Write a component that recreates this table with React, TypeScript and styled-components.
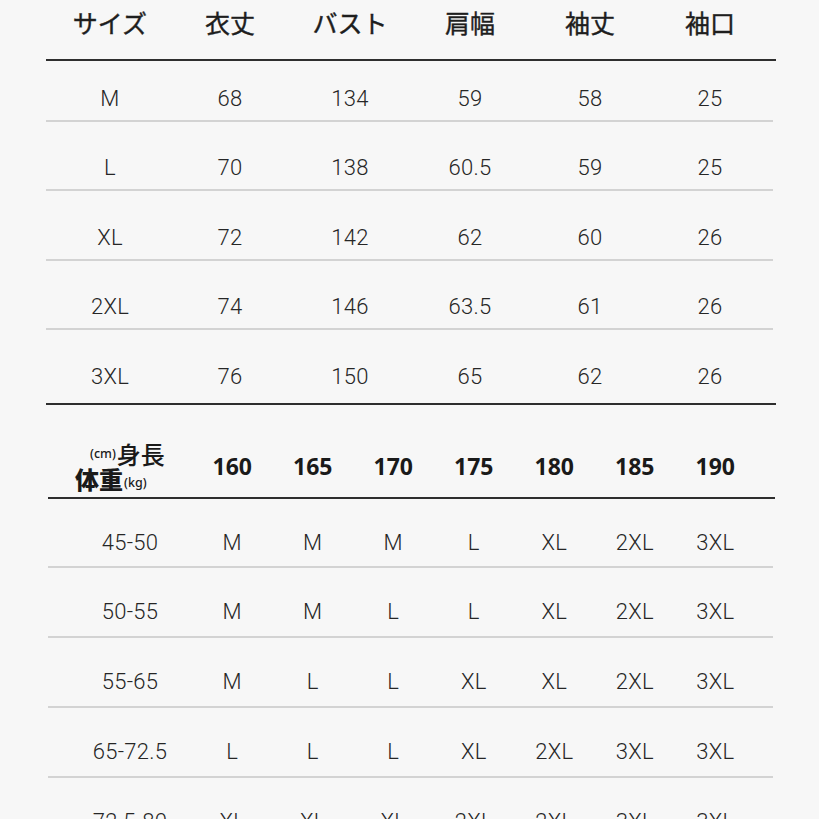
import React from 'react';
import styled, { createGlobalStyle } from 'styled-components';

const GlobalStyle = createGlobalStyle`
  html, body {
    margin: 0;
    padding: 0;
    background: #f7f7f7;
  }
  body {
    font-family: Roboto, "Noto Sans", "Noto Sans CJK JP", sans-serif;
    color: #262626;
  }
`;

const Page = styled.div`
  width: 819px;
  height: 819px;
  overflow: hidden;
  background: #f7f7f7;
  padding-left: 46px;
  box-sizing: border-box;
`;

const Table = styled.div`
  width: 730px;
  display: flex;
  flex-direction: column;
`;

const SizeRow = styled.div<{ $top: number; $bottom: number; $line: 'dark' | 'light' }>`
  display: grid;
  grid-template-columns: repeat(6, 120px);
  padding: ${(p) => p.$top}px 6px ${(p) => p.$bottom}px 4px;
  border-bottom: 2px solid ${(p) => (p.$line === 'dark' ? '#2e2e2e' : '#d3d3d3')};
  margin-right: ${(p) => (p.$line === 'dark' ? 0 : 3)}px;
`;

const HeadCell = styled.div`
  text-align: center;
  font-family: "Noto Sans CJK JP", "Noto Sans", sans-serif;
  font-weight: 400;
  font-size: 25px;
  line-height: 26px;
  color: #1e1e1e;
  -webkit-text-stroke: 0.4px #1e1e1e;
`;

const Cell = styled.div`
  text-align: center;
  font-family: Roboto, "Liberation Sans", sans-serif;
  font-weight: 300;
  font-size: 22px;
  line-height: 22px;
  letter-spacing: 0.3px;
  color: #262626;
`;

const FitRow = styled.div<{ $top: number; $bottom: number; $line: 'dark' | 'light' }>`
  display: grid;
  grid-template-columns: 144px repeat(7, 80.5px);
  align-items: center;
  padding: ${(p) => p.$top}px 0 ${(p) => p.$bottom}px 0;
  border-bottom: 2px solid ${(p) => (p.$line === 'dark' ? '#2e2e2e' : '#d3d3d3')};
  margin-left: 2px;
  margin-right: ${(p) => (p.$line === 'dark' ? 1 : 3)}px;
`;

const WeightCell = styled(Cell)`
  padding-left: 20px;
`;

const HeightCell = styled.div`
  text-align: center;
  font-family: "Noto Sans", "Liberation Sans", sans-serif;
  font-weight: 700;
  font-size: 23px;
  line-height: 24px;
  color: #1a1a1a;
`;

const Label = styled.div`
  display: flex;
  flex-direction: column;
  padding-left: 27px;
  font-family: "Noto Sans CJK JP", sans-serif;
  color: #1a1a1a;
`;

const LabelLine = styled.div<{ $indent: number }>`
  display: flex;
  align-items: ${(p) => (p.$indent > 0 ? 'center' : 'flex-end')};
  padding-left: ${(p) => p.$indent}px;
  line-height: 25px;
`;

const Big = styled.span<{ $bold?: boolean }>`
  font-size: 24px;
  font-weight: ${(p) => (p.$bold ? 900 : 500)};
`;

const Unit = styled.span`
  font-family: "Noto Sans", sans-serif;
  font-size: 12.5px;
  font-weight: 500;
  line-height: 16px;
  padding: 0 1px;
`;

const headers = ['サイズ', '衣丈', 'バスト', '肩幅', '袖丈', '袖口'];

const sizes = [
  ['M', '68', '134', '59', '58', '25'],
  ['L', '70', '138', '60.5', '59', '25'],
  ['XL', '72', '142', '62', '60', '26'],
  ['2XL', '74', '146', '63.5', '61', '26'],
  ['3XL', '76', '150', '65', '62', '26'],
];

const sizePad = [
  [27, 10],
  [35, 10],
  [36, 10],
  [35, 10],
  [36, 15],
];

const heights = ['160', '165', '170', '175', '180', '185', '190'];

const fits = [
  ['45-50', 'M', 'M', 'M', 'L', 'XL', '2XL', '3XL'],
  ['50-55', 'M', 'M', 'L', 'L', 'XL', '2XL', '3XL'],
  ['55-65', 'M', 'L', 'L', 'XL', 'XL', '2XL', '3XL'],
  ['65-72.5', 'L', 'L', 'L', 'XL', '2XL', '3XL', '3XL'],
  ['72.5-80', 'XL', 'XL', 'XL', '2XL', '2XL', '3XL', '3XL'],
];

const fitPad = [
  [33, 12],
  [33, 13],
  [33, 13],
  [33, 13],
  [33, 13],
];

const App: React.FC = () => {
  return (
    <Page>
      <GlobalStyle />
      <Table>
        <SizeRow $top={9} $bottom={24} $line="dark">
          {headers.map((h) => (
            <HeadCell key={h}>{h}</HeadCell>
          ))}
        </SizeRow>
        {sizes.map((row, i) => (
          <SizeRow
            key={row[0]}
            $top={sizePad[i][0]}
            $bottom={sizePad[i][1]}
            $line={i === sizes.length - 1 ? 'dark' : 'light'}
          >
            {row.map((v, j) => (
              <Cell key={j}>{v}</Cell>
            ))}
          </SizeRow>
        ))}
        <FitRow $top={36} $bottom={6} $line="dark">
          <Label>
            <LabelLine $indent={14}>
              <Unit>(cm)</Unit>
              <Big>身長</Big>
            </LabelLine>
            <LabelLine $indent={0}>
              <Big $bold>体重</Big>
              <Unit>(kg)</Unit>
            </LabelLine>
          </Label>
          {heights.map((h) => (
            <HeightCell key={h}>{h}</HeightCell>
          ))}
        </FitRow>
        {fits.map((row, i) => (
          <FitRow key={row[0]} $top={fitPad[i][0]} $bottom={fitPad[i][1]} $line="light">
            {row.map((v, j) =>
              j === 0 ? <WeightCell key={j}>{v}</WeightCell> : <Cell key={j}>{v}</Cell>
            )}
          </FitRow>
        ))}
      </Table>
    </Page>
  );
};

export default App;
